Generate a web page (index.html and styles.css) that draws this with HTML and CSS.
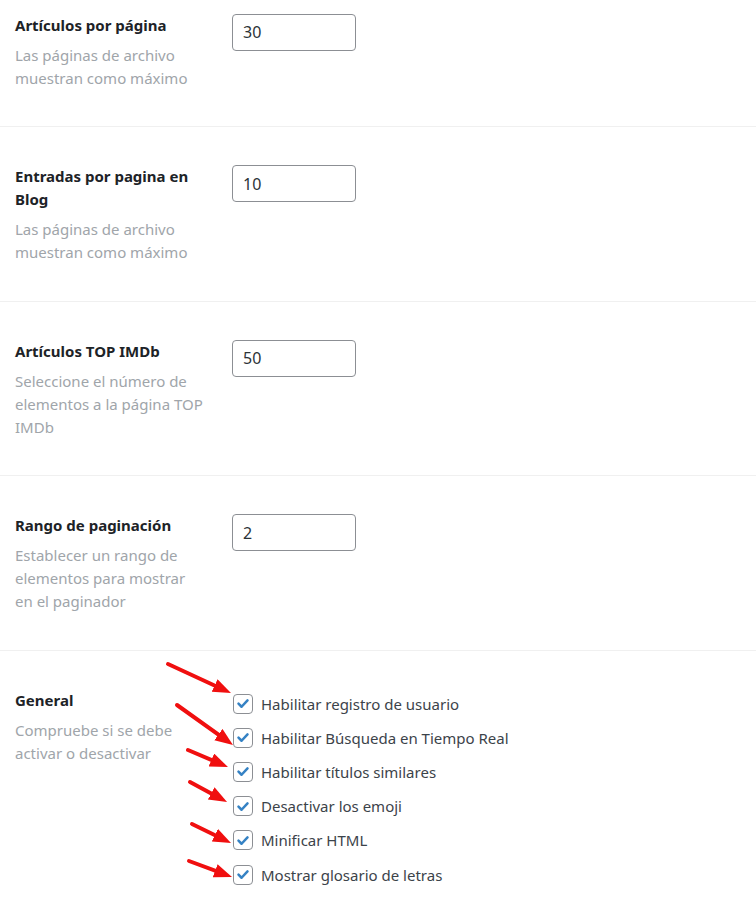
FILE: index.html
```html
<!DOCTYPE html>
<html lang="es">
<head>
	<meta charset="UTF-8">
	<title>Ajustes</title>
	<link rel="stylesheet" href="styles.css">
</head>
<body>
	<div class="settings">
		<div class="row first">
			<div class="label">
				<div class="title">Artículos por página</div>
				<p class="desc">Las páginas de archivo muestran como máximo</p>
			</div>
			<div class="field"><input class="num" type="text" value="30"></div>
		</div>

		<div class="row">
			<div class="label">
				<div class="title">Entradas por pagina en Blog</div>
				<p class="desc">Las páginas de archivo muestran como máximo</p>
			</div>
			<div class="field"><input class="num" type="text" value="10"></div>
		</div>

		<div class="row">
			<div class="label">
				<div class="title">Artículos TOP IMDb</div>
				<p class="desc">Seleccione el número de elementos a la página TOP IMDb</p>
			</div>
			<div class="field"><input class="num" type="text" value="50"></div>
		</div>

		<div class="row">
			<div class="label">
				<div class="title">Rango de paginación</div>
				<p class="desc">Establecer un rango de elementos para mostrar en el paginador</p>
			</div>
			<div class="field"><input class="num" type="text" value="2"></div>
		</div>

		<div class="row general">
			<div class="label">
				<div class="title">General</div>
				<p class="desc">Compruebe si se debe activar o desactivar</p>
			</div>
			<ul class="checks">
				<li><span class="box"><svg viewBox="0 0 20 20"><path d="M5 10.2l3.4 3.4L15 6.6"/></svg></span>Habilitar registro de usuario</li>
				<li><span class="box"><svg viewBox="0 0 20 20"><path d="M5 10.2l3.4 3.4L15 6.6"/></svg></span>Habilitar Búsqueda en Tiempo Real</li>
				<li><span class="box"><svg viewBox="0 0 20 20"><path d="M5 10.2l3.4 3.4L15 6.6"/></svg></span>Habilitar títulos similares</li>
				<li><span class="box"><svg viewBox="0 0 20 20"><path d="M5 10.2l3.4 3.4L15 6.6"/></svg></span>Desactivar los emoji</li>
				<li><span class="box"><svg viewBox="0 0 20 20"><path d="M5 10.2l3.4 3.4L15 6.6"/></svg></span>Minificar HTML</li>
				<li><span class="box"><svg viewBox="0 0 20 20"><path d="M5 10.2l3.4 3.4L15 6.6"/></svg></span>Mostrar glosario de letras</li>
			</ul>

			<!-- flechas de anotacion -->
			<svg class="arrows" width="756" height="260" viewBox="0 0 756 260">
				<defs>
					<marker id="head" markerUnits="userSpaceOnUse" markerWidth="19" markerHeight="15" refX="10" refY="7" orient="auto">
						<path d="M0,0 L18,7 L0,14 z" fill="#f00f0f"/>
					</marker>
				</defs>
				<g stroke="#f00f0f" stroke-width="4" stroke-linecap="round" marker-end="url(#head)">
					<line x1="168" y1="13" x2="223.7" y2="38.7"/>
					<line x1="177" y1="54" x2="226.5" y2="89.4"/>
					<line x1="188" y1="99" x2="220.6" y2="112.9"/>
					<line x1="190" y1="131" x2="220" y2="147.2"/>
					<line x1="192" y1="173" x2="223.8" y2="188.5"/>
					<line x1="189" y1="210" x2="224.5" y2="223.2"/>
				</g>
			</svg>
		</div>
	</div>
</body>
</html>
```

FILE: styles.css
```css
* {
	margin: 0;
	padding: 0;
	box-sizing: border-box;
}
body {
	background-color: #fff;
	font-family: "Noto Sans", "Open Sans", sans-serif;
	font-size: 15px;
	color: #1d2327;
}
.settings {
	width: 756px;
}
.row {
	display: flex;
	align-items: flex-start;
	padding: 38px 0 36.5px 15px;
	border-bottom: 1px solid #f0f0f0;
}
.row.first {
	padding-top: 13.5px;
}
.row.general {
	position: relative;
	border-bottom: 0;
}
.label {
	width: 190px;
	margin-right: 27px;
}
.title {
	font-weight: 700;
	line-height: 23px;
	color: #1d2327;
}
.desc {
	margin-top: 7px;
	line-height: 23px;
	color: #a0a5aa;
}
.num {
	width: 124px;
	height: 37px;
	padding: 0 10px;
	border: 1px solid #8c8f94;
	border-radius: 4px;
	font-family: inherit;
	font-size: 16px;
	color: #2c3338;
	background-color: #fff;
	outline: none;
}
.checks {
	margin-top: -2px;
}
.checks li {
	list-style: none;
	display: flex;
	align-items: center;
	height: 34.2px;
	margin-left: 1px;
	color: #3c434a;
	font-size: 15px;
}
.checks .box {
	width: 20px;
	height: 20px;
	margin-right: 8px;
	border: 1px solid #8c8f94;
	border-radius: 4px;
	display: flex;
	align-items: center;
	justify-content: center;
}
.checks .box svg {
	width: 19px;
	height: 19px;
	fill: none;
	stroke: #3582c4;
	stroke-width: 2.8;
	stroke-linecap: round;
	stroke-linejoin: round;
}
.arrows {
	position: absolute;
	left: 0;
	top: 0;
	pointer-events: none;
}
```
